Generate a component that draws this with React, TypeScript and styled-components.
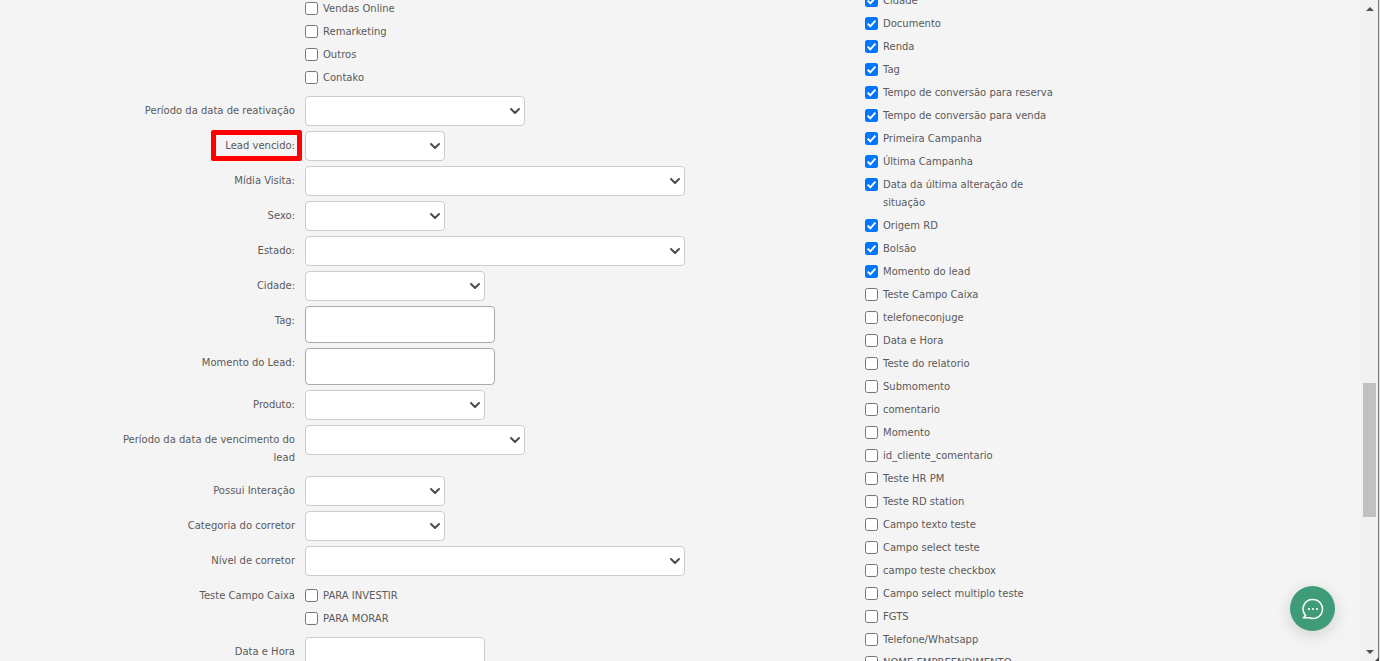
import { createGlobalStyle } from "styled-components";
import styled from "styled-components";

const GlobalStyle = createGlobalStyle`
  html, body {
    margin: 0;
    padding: 0;
    height: 100%;
    overflow: hidden;
    background-color: #f4f4f4;
  }
  * {
    box-sizing: border-box;
  }
`;

const Page = styled.div`
  display: flex;
  height: 661px;
  width: 1380px;
  overflow: hidden;
  position: relative;
  font-family: "DejaVu Sans", Verdana, sans-serif;
  font-size: 10px;
  line-height: 18px;
  color: #5a5a5a;
`;

const Content = styled.div`
  flex: 1;
  display: flex;
  overflow: hidden;
  height: 661px;
`;

const LeftColumn = styled.div`
  width: 865px;
  flex-shrink: 0;
  margin-top: -6px;
`;

const RightColumn = styled.div`
  flex: 1;
  margin-top: -8px;
`;

const Row = styled.div`
  display: flex;
  margin-bottom: 5px;
`;

const Label = styled.label`
  width: 295px;
  flex-shrink: 0;
  padding: 6px 0 4px 120px;
  text-align: right;
`;

const Controls = styled.div`
  margin-left: 10px;
`;

const CheckGroup = styled.div`
  padding-top: 6px;
  margin-bottom: -1px;
`;

const CheckRow = styled.div`
  display: flex;
  align-items: flex-start;
  margin-bottom: 5px;
`;

const CheckBox = styled.span<{ $checked?: boolean }>`
  width: 13px;
  height: 13px;
  margin-top: 2px;
  flex-shrink: 0;
  border-radius: 2.5px;
  display: flex;
  align-items: center;
  justify-content: center;
  border: ${(p) => (p.$checked ? "none" : "1px solid #767676")};
  background-color: ${(p) => (p.$checked ? "#0075ff" : "#fff")};
`;

const CheckText = styled.span`
  margin-left: 5px;
  width: 178px;
  flex-shrink: 0;
`;

const LeftCheckText = styled(CheckText)`
  width: 300px;
`;

const SelectBox = styled.div<{ $width: number }>`
  width: ${(p) => p.$width}px;
  height: 30px;
  background-color: #fff;
  border: 1px solid #ccc;
  border-radius: 4px;
  display: flex;
  align-items: center;
  justify-content: flex-end;
  padding-right: 1px;
`;

const TextBox = styled.div<{ $width: number; $height: number }>`
  width: ${(p) => p.$width}px;
  height: ${(p) => p.$height}px;
  background-color: #fff;
  border: 1px solid #ccc;
  border-radius: 4px;
`;

const TagBox = styled.div`
  width: 190px;
  height: 37px;
  background-color: #fff;
  border: 1px solid #aaa;
  border-radius: 4px;
`;

const Highlight = styled.div`
  position: absolute;
  left: 211px;
  top: 130px;
  width: 91px;
  height: 31px;
  border: 5px solid #ff0000;
  border-radius: 2px;
`;

const Scrollbar = styled.div`
  width: 19px;
  flex-shrink: 0;
  height: 661px;
  background-color: #f1f1f1;
  border-right: 1px solid #e4e4e4;
  box-shadow: inset -1px 0 0 #777;
  position: relative;
`;

const Thumb = styled.div`
  width: 13px;
  height: 134px;
  margin: 383px 0 0 2px;
  background-color: #c1c1c1;
`;

const ArrowUp = styled.div`
  position: absolute;
  left: 5px;
  top: 7px;
  width: 0;
  height: 0;
  border-left: 4px solid transparent;
  border-right: 4px solid transparent;
  border-bottom: 4px solid #505050;
`;

const ArrowDown = styled.div`
  position: absolute;
  left: 5px;
  bottom: 7px;
  width: 0;
  height: 0;
  border-left: 4px solid transparent;
  border-right: 4px solid transparent;
  border-top: 4px solid #505050;
`;

const ResizeCorner = styled.div`
  position: absolute;
  right: 0;
  bottom: 0;
  width: 0;
  height: 0;
  border-left: 4px solid transparent;
  border-bottom: 4px solid #444;
`;

const ChatButton = styled.button`
  position: absolute;
  left: 1290px;
  top: 586px;
  width: 45px;
  height: 45px;
  padding: 0;
  border: none;
  border-radius: 50%;
  background-color: #3f9c78;
  box-shadow: 0 4px 16px rgba(0, 0, 0, 0.15);
  display: flex;
  align-items: center;
  justify-content: center;
`;

function Chevron() {
  return (
    <svg width="16" height="16" viewBox="0 0 16 16">
      <path d="M4 6l4 4 4-4" fill="none" stroke="#4d4d4d" strokeWidth="2" strokeLinecap="round" strokeLinejoin="round" />
    </svg>
  );
}

function Check() {
  return (
    <svg width="11" height="11" viewBox="0 0 11 11">
      <path d="M1.6 5.6l2.7 2.7 5.1-5.6" fill="none" stroke="#fff" strokeWidth="2" />
    </svg>
  );
}

function ChatIcon() {
  return (
    <svg width="24" height="24" viewBox="0 0 24 24">
      <path
        d="M12 2.5a9.5 9.5 0 1 1-3.6 18.3H2.4l2.2-2.4A9.5 9.5 0 0 1 12 2.5z"
        fill="none"
        stroke="#fff"
        strokeWidth="1.5"
        strokeLinejoin="round"
      />
      <circle cx="8" cy="12" r="1.1" fill="#fff" />
      <circle cx="12" cy="12" r="1.1" fill="#fff" />
      <circle cx="16" cy="12" r="1.1" fill="#fff" />
    </svg>
  );
}

function Select({ label, width }: { label: string; width: number }) {
  return (
    <Row>
      <Label>{label}</Label>
      <Controls>
        <SelectBox $width={width}>
          <Chevron />
        </SelectBox>
      </Controls>
    </Row>
  );
}

function Checks({ label, items }: { label?: string; items: string[] }) {
  return (
    <Row>
      <Label>{label}</Label>
      <Controls>
        <CheckGroup>
          {items.map((item) => (
            <CheckRow key={item}>
              <CheckBox />
              <LeftCheckText>{item}</LeftCheckText>
            </CheckRow>
          ))}
        </CheckGroup>
      </Controls>
    </Row>
  );
}

const checkedColumns = [
  "Cidade",
  "Documento",
  "Renda",
  "Tag",
  "Tempo de conversão para reserva",
  "Tempo de conversão para venda",
  "Primeira Campanha",
  "Última Campanha",
  "Data da última alteração de situação",
  "Origem RD",
  "Bolsão",
  "Momento do lead",
];

const uncheckedColumns = [
  "Teste Campo Caixa",
  "telefoneconjuge",
  "Data e Hora",
  "Teste do relatorio",
  "Submomento",
  "comentario",
  "Momento",
  "id_cliente_comentario",
  "Teste HR PM",
  "Teste RD station",
  "Campo texto teste",
  "Campo select teste",
  "campo teste checkbox",
  "Campo select multiplo teste",
  "FGTS",
  "Telefone/Whatsapp",
  "NOME EMPREENDIMENTO",
];

export default function App() {
  return (
    <Page>
      <GlobalStyle />
      <Content>
        <LeftColumn>
          <Checks items={["Vendas Online", "Remarketing", "Outros", "Contako"]} />
          <Select label="Período da data de reativação" width={220} />
          <Select label="Lead vencido:" width={140} />
          <Select label="Mídia Visita:" width={380} />
          <Select label="Sexo:" width={140} />
          <Select label="Estado:" width={380} />
          <Select label="Cidade:" width={180} />
          <Row>
            <Label>Tag:</Label>
            <Controls>
              <TagBox />
            </Controls>
          </Row>
          <Row>
            <Label>Momento do Lead:</Label>
            <Controls>
              <TagBox />
            </Controls>
          </Row>
          <Select label="Produto:" width={180} />
          <Select label="Período da data de vencimento do lead" width={220} />
          <Select label="Possui Interação" width={140} />
          <Select label="Categoria do corretor" width={140} />
          <Select label="Nível de corretor" width={380} />
          <Checks label="Teste Campo Caixa" items={["PARA INVESTIR", "PARA MORAR"]} />
          <Row>
            <Label>Data e Hora</Label>
            <Controls>
              <TextBox $width={180} $height={30} />
            </Controls>
          </Row>
        </LeftColumn>
        <RightColumn>
          {checkedColumns.map((item) => (
            <CheckRow key={item}>
              <CheckBox $checked>
                <Check />
              </CheckBox>
              <CheckText>{item}</CheckText>
            </CheckRow>
          ))}
          {uncheckedColumns.map((item) => (
            <CheckRow key={item}>
              <CheckBox />
              <CheckText>{item}</CheckText>
            </CheckRow>
          ))}
        </RightColumn>
      </Content>
      <Scrollbar>
        <ArrowUp />
        <Thumb />
        <ArrowDown />
        <ResizeCorner />
      </Scrollbar>
      <Highlight />
      <ChatButton>
        <ChatIcon />
      </ChatButton>
    </Page>
  );
}
